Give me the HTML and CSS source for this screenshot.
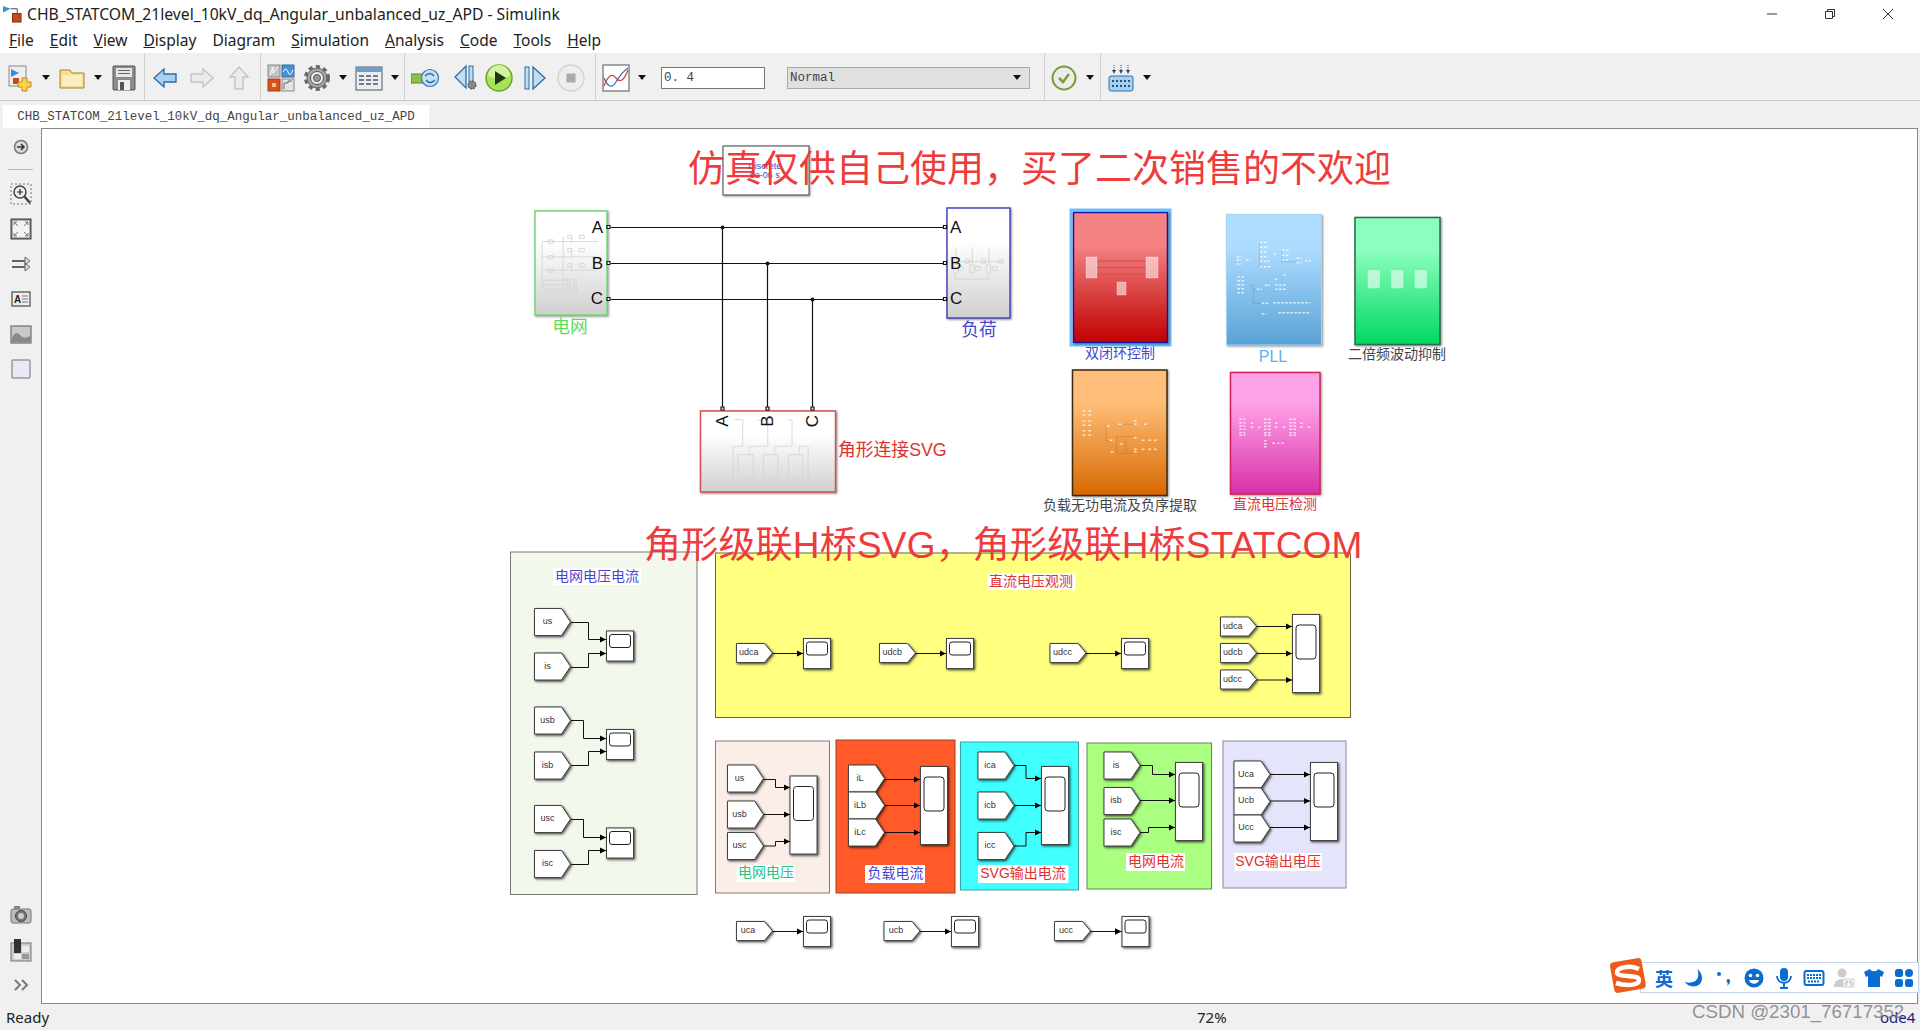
FILE: index.html
```html
<!DOCTYPE html>
<html>
  <head>
    <title>CHB_STATCOM_21level_10kV_dq_Angular_unbalanced_uz_APD - Simulink</title>
    <link rel="stylesheet" href="styles.css">
  </head>
  <body>
    <div class="titlebar">
      <svg class="app-icon" viewBox="0 0 20 20"><path d="M0 2l8 3-8 4z" fill="#3f8fd8"/><path d="M8 5h7v6" class="ico-line"/><rect x="10" y="10" width="9" height="9" fill="#c8481c" stroke="#803010"/></svg>
      <span class="title-text">CHB_STATCOM_21level_10kV_dq_Angular_unbalanced_uz_APD - Simulink</span>
      <div class="win-controls">
        <svg viewBox="0 0 12 12"><path d="M1 6h10" class="win-line"/></svg>
        <svg viewBox="0 0 12 12"><path d="M1.5 3.5h7v7h-7zM3.5 3.5v-2h7v7h-2" class="win-line"/></svg>
        <svg viewBox="0 0 12 12"><path d="M1 1l10 10M11 1L1 11" class="win-line"/></svg>
      </div>
    </div>

    <div class="menubar">
      <span><u>F</u>ile</span>
      <span><u>E</u>dit</span>
      <span><u>V</u>iew</span>
      <span><u>D</u>isplay</span>
      <span>Dia<u>g</u>ram</span>
      <span><u>S</u>imulation</span>
      <span><u>A</u>nalysis</span>
      <span><u>C</u>ode</span>
      <span><u>T</u>ools</span>
      <span><u>H</u>elp</span>
    </div>

    <div class="toolbar">
      <div class="tool-group group-file">
        <svg class="tool" viewBox="0 0 28 28"><rect x="3" y="2" width="17" height="20" fill="#eee" stroke="#888"/><path d="M5 5l8 4-8 4z" fill="#3a8ad4"/><rect x="7" y="14" width="6" height="6" fill="#c8481c"/><path d="M16 14h5v4h4v5h-4v4h-5v-4h-4v-5h4z" fill="#ffd24a" stroke="#b58a1c"/></svg>
        <i class="drop"></i>
        <svg class="tool" viewBox="0 0 28 28"><path d="M2 6h10l2 3h12v15H2z" fill="#f7dc93" stroke="#a8842c"/><path d="M4 11h20v11H4z" fill="#fbeec4"/></svg>
        <i class="drop"></i>
        <svg class="tool" viewBox="0 0 28 28"><rect x="3" y="2" width="22" height="24" rx="1" fill="#8c8c8c" stroke="#555"/><rect x="6" y="4" width="16" height="9" fill="#e6e6e6"/><path d="M8 6.500h12M8 9.500h12" class="ico-dark"/><rect x="8" y="16" width="12" height="10" fill="#eee"/><rect x="10" y="18" width="4" height="8" fill="#555"/></svg>
      </div>
      <div class="tool-group group-nav">
        <svg class="tool" viewBox="0 0 28 28"><path d="M3 14l10-9v5h12v8H13v5z" fill="#a9d0f0" stroke="#2d6ea8" stroke-width="1.4"/></svg>
        <svg class="tool" viewBox="0 0 28 28"><path d="M25 14l-10-9v5H3v8h12v5z" fill="#ececec" stroke="#c4c4c4" stroke-width="1.4"/></svg>
        <svg class="tool" viewBox="0 0 28 28"><path d="M14 3l-9 10h5v12h8V13h5z" fill="#ececec" stroke="#c4c4c4" stroke-width="1.4"/></svg>
      </div>
      <div class="tool-group group-lib">
        <svg class="tool" viewBox="0 0 28 28"><rect x="1" y="1" width="12" height="12" fill="#c4c4c4" stroke="#888"/><path d="M3 11l3-8v6l5-6" fill="none" stroke="#fff"/><rect x="15" y="1" width="12" height="12" fill="#4a90d0" stroke="#2d6ea8"/><path d="M16 8q3-6 5 0t5-2" fill="none" stroke="#fff"/><rect x="1" y="15" width="12" height="12" fill="#d8501c" stroke="#a03c10"/><rect x="5" y="19" width="4" height="4" fill="#f7c08a"/><rect x="15" y="15" width="12" height="12" fill="#e4e4e4" stroke="#888"/><path d="M17 25v-6h4v-2h4" fill="none" stroke="#666"/></svg>
        <svg class="tool" viewBox="0 0 28 28"><circle cx="14" cy="14" r="11" fill="none" stroke="#6a6a6a" stroke-width="4" stroke-dasharray="4 3.2"/><circle cx="14" cy="14" r="10" fill="#a4a4a4" stroke="#666"/><circle cx="14" cy="14" r="6.5" fill="#eee" stroke="#555"/><circle cx="14" cy="14" r="3.5" fill="#999" stroke="#555"/></svg>
        <i class="drop"></i>
        <svg class="tool" viewBox="0 0 28 28"><rect x="1" y="3" width="26" height="23" fill="#e8eef4" stroke="#556"/><rect x="1" y="3" width="26" height="5" fill="#6f9cc8"/><path d="M4 12h20M4 16h20M4 20h20" stroke="#778" stroke-width="2" stroke-dasharray="5 2"/></svg>
        <i class="drop"></i>
      </div>
      <div class="tool-group group-sim">
        <svg class="tool" viewBox="0 0 28 28"><rect x="0" y="10" width="13" height="9" fill="#8fc04a" stroke="#5f8a2a"/><circle cx="19" cy="14" r="8.500" fill="#c6e0f6" stroke="#3f78b0" stroke-width="1.2"/><path d="M14 12q5-5 9 0M24 16q-5 5-9 0" fill="none" stroke="#2d6ea8" stroke-width="1.600"/></svg>
        <svg class="tool tool-push" viewBox="0 0 28 28"><path d="M2 13L13 2v22z" fill="#c4dcf2" stroke="#2d6ea8" stroke-width="1.3"/><rect x="16" y="2" width="4" height="16" fill="#c4dcf2" stroke="#2d6ea8"/><circle cx="19" cy="21" r="4" fill="#888" stroke="#444" stroke-dasharray="2 1"/></svg>
        <svg class="tool tool-pull" viewBox="0 0 28 28"><circle cx="14" cy="14" r="13" fill="#a8e05a" stroke="#6aa82a" stroke-width="1.5"/><path d="M3 12a11 11 0 0 1 22 0q-11 5-22 0z" fill="#d2f2a0"/><path d="M10 7l11 7-11 7z" fill="#1c3a10"/></svg>
        <svg class="tool" viewBox="0 0 28 28"><rect x="4" y="3" width="4" height="22" fill="#c4dcf2" stroke="#2d6ea8"/><path d="M12 3l12 11-12 11z" fill="#c4dcf2" stroke="#2d6ea8" stroke-width="1.3"/></svg>
        <svg class="tool" viewBox="0 0 28 28"><circle cx="14" cy="14" r="13" fill="#eee" stroke="#d4d4d4" stroke-width="1.5"/><rect x="9.5" y="9.5" width="9" height="9" fill="#aaa"/></svg>
      </div>
      <div class="tool-group group-time">
        <svg class="tool" viewBox="0 0 28 28"><rect x="1" y="1" width="26" height="26" fill="#fff" stroke="#777" stroke-width="1.3"/><path d="M2 22q6-16 12-8t12-8" fill="none" stroke="#d84040" stroke-width="1.3"/><path d="M2 14q6 14 12 4t12-14" fill="none" stroke="#3a70c8" stroke-width="1.3"/></svg>
        <i class="drop"></i>
        <span class="stop-time">0. 4</span>
        <span class="sim-mode">Normal<i class="drop"></i></span>
      </div>
      <div class="tool-group group-check">
        <svg class="tool" viewBox="0 0 28 28"><circle cx="14" cy="14" r="11.5" fill="#ececec" stroke="#76a03c" stroke-width="2"/><path d="M9 14l4 4 6-8" fill="none" stroke="#76a03c" stroke-width="2.5"/></svg>
        <i class="drop"></i>
      </div>
      <div class="tool-group group-grid">
        <svg class="tool" viewBox="0 0 28 28"><rect x="2" y="12" width="24" height="15" rx="2" fill="#a6d0f0" stroke="#2f6ea8"/><path d="M5 17h18M5 22h18" stroke="#24507c" stroke-width="2" stroke-dasharray="2 2"/><path d="M7 1v5M14 1v5M21 1v5" stroke="#24507c" stroke-dasharray="1 1"/><path d="M5 6h4l-2 4zM12 6h4l-2 4zM19 6h4l-2 4z" fill="#24507c"/></svg>
        <i class="drop"></i>
      </div>
    </div>

    <div class="tabbar">
      <div class="tab">CHB_STATCOM_21level_10kV_dq_Angular_unbalanced_uz_APD</div>
    </div>

    <div class="workspace">
      <div class="palette">
        <svg class="pal-top" viewBox="0 0 20 20"><circle cx="10" cy="10" r="6.5" fill="#ddd" stroke="#777" stroke-width="1.5"/><path d="M6 10h7M10 7l3 3-3 3" fill="none" stroke="#333" stroke-width="1.5"/></svg>
        <div class="pal-rule"></div>
        <svg class="pal-icon" viewBox="0 0 24 24"><rect x="2" y="2" width="20" height="20" fill="none" stroke="#777" stroke-dasharray="2 2"/><circle cx="11" cy="10" r="6" fill="#eee" stroke="#444" stroke-width="1.5"/><path d="M8 10h6M11 7v6" stroke="#222" stroke-width="1.2"/><path d="M15 14l6 7" stroke="#444" stroke-width="2.5"/></svg>
        <svg class="pal-icon" viewBox="0 0 24 24"><rect x="2" y="2" width="20" height="20" fill="#777" stroke="#444"/><rect x="3.500" y="3.500" width="17" height="17" fill="#f2f2f2"/><path d="M5 5l4 4M5 5h3M5 5v3M19 5l-4 4M19 5h-3M19 5v3M5 19l4-4M5 19h3M5 19v-3M19 19l-4-4M19 19h-3M19 19v-3" fill="none" stroke="#777"/></svg>
        <svg class="pal-icon" viewBox="0 0 24 24"><path d="M3 9h17M3 15h17" stroke="#333" stroke-width="1.3"/><path d="M16 5l5 4-5 4zM16 11l5 4-5 4z" fill="#ddd" stroke="#666"/></svg>
        <svg class="pal-icon" viewBox="0 0 24 24"><rect x="3" y="5" width="18" height="14" fill="#eee" stroke="#555" stroke-width="1.3"/><text x="5" y="12" class="pal-letter">A</text><path d="M13 9h6M13 12h6M13 15h6" stroke="#777"/></svg>
        <svg class="pal-icon" viewBox="0 0 24 24"><rect x="2" y="4" width="20" height="17" fill="#c8c8c8" stroke="#777" stroke-width="1.3"/><path d="M3 16q4-8 8-3t10 1v6H3z" fill="#888"/></svg>
        <svg class="pal-icon" viewBox="0 0 24 24"><rect x="3" y="3" width="18" height="18" rx="1" fill="#e8e8f8" stroke="#999" stroke-width="1.5"/></svg>
        <div class="pal-bottom">
          <svg class="pal-icon" viewBox="0 0 24 24"><rect x="2" y="6" width="20" height="14" rx="2" fill="#bbb" stroke="#777"/><circle cx="12" cy="13" r="5.5" fill="#777" stroke="#444"/><circle cx="12" cy="13" r="3" fill="#ccc"/><rect x="5" y="3" width="6" height="3" fill="#888"/></svg>
          <svg class="pal-icon" viewBox="0 0 24 24"><rect x="2" y="5" width="20" height="18" fill="#ccc" stroke="#777"/><rect x="5" y="1" width="7" height="14" fill="#333"/><rect x="13" y="8" width="7" height="6" fill="#eee"/><rect x="5" y="16" width="7" height="5" fill="#eee"/><rect x="13" y="16" width="7" height="5" fill="#999"/></svg>
          <svg class="pal-icon" viewBox="0 0 24 24"><path d="M6 7l5 5-5 5M13 7l5 5-5 5" fill="none" stroke="#777" stroke-width="2"/></svg>
        </div>
      </div>

      <div class="canvas">
        <svg class="diagram" viewBox="42 129 1875 874">
          <defs>
            <marker id="arrow" viewBox="0 0 6 6" refX="6" refY="3" markerWidth="6.5" markerHeight="6.5" markerUnits="userSpaceOnUse" orient="auto"><path d="M0 0L6 3L0 6z"/></marker>
            <linearGradient id="g-white" x1="0" y1="0" x2="0" y2="1"><stop offset="0.3" stop-color="#fff"/><stop offset="1" stop-color="#cfcfcf"/></linearGradient>
            <linearGradient id="g-red" x1="0" y1="0" x2="0" y2="1"><stop offset="0.25" stop-color="#f48282"/><stop offset="1" stop-color="#c00000"/></linearGradient>
            <linearGradient id="g-blue" x1="0" y1="0" x2="0" y2="1"><stop offset="0.25" stop-color="#aedcff"/><stop offset="1" stop-color="#58a2d6"/></linearGradient>
            <linearGradient id="g-green" x1="0" y1="0" x2="0" y2="1"><stop offset="0.25" stop-color="#8cffc0"/><stop offset="1" stop-color="#00d860"/></linearGradient>
            <linearGradient id="g-orange" x1="0" y1="0" x2="0" y2="1"><stop offset="0.25" stop-color="#ffbf7a"/><stop offset="1" stop-color="#d86800"/></linearGradient>
            <linearGradient id="g-pink" x1="0" y1="0" x2="0" y2="1"><stop offset="0.25" stop-color="#ffa2e8"/><stop offset="1" stop-color="#d830a8"/></linearGradient>
            <g id="tag-lg"><path d="M0 0H27L36 13.5L27 27H0z" class="blk-white"/></g>
            <g id="tag-sm"><path d="M0 0H28L36 9.5L28 19H0z" class="blk-white"/></g>
            <g id="scope"><rect width="27" height="30" class="blk-white"/><rect x="3" y="3.5" width="21" height="13" rx="2.5" class="screen"/></g>
            <g id="scope-tall"><rect width="27" height="78" class="blk-white"/><rect x="3.5" y="10.5" width="20" height="34" rx="3" class="screen"/></g>
          </defs>

          <!-- power circuit -->
          <rect x="723" y="146" width="86" height="49" class="blk-white"/>
          <text x="766" y="166" class="pg-text">Discrete,</text>
          <text x="766" y="175" class="pg-text">5e-06 s.</text>

          <rect x="535" y="211" width="72" height="104" fill="url(#g-white)" class="blk line-green"/>
          <g transform="translate(500 130) scale(.357 .333)" class="sketch">
            <path d="M118 335V480M118 335H275M118 381H275M118 421H275M177 320V460M118 451H190M118 465H190M118 480H190M200 320V340M200 360V385M200 405V425"/>
            <path d="M135 330h14v10h-14zM135 377h14v10h-14zM135 417h14v10h-14zM190 316h12v10h-12zM222 316h14v10h-14zM190 356h12v10h-12zM222 356h14v10h-14zM190 401h12v10h-12zM222 401h14v10h-14zM188 447h10v8h-10zM205 447h10v8h-10zM188 461h10v8h-10zM205 461h10v8h-10zM188 475h10v8h-10zM205 475h10v8h-10z"/>
          </g>
          <text x="603" y="227" class="port end">A</text>
          <text x="603" y="263" class="port end">B</text>
          <text x="603" y="298" class="port end">C</text>
          <text x="570" y="327" class="cn17 col-green mid">电网</text>

          <rect x="947" y="208" width="63" height="110" fill="url(#g-white)" class="blk line-blue"/>
          <g transform="translate(500 130) scale(.357 .333)" class="sketch">
            <path d="M1277 352V405M1323 352V405M1370 352V405M1275 430V448H1368V430M1270 395H1410"/>
            <path d="M1303 388h12v12h-12zM1349 388h12v12h-12zM1397 388h12v12h-12zM1285 410h12v12h-12zM1332 410h12v12h-12zM1380 410h12v12h-12zM1270 405h12v24h-12zM1316 405h12v24h-12zM1362 405h12v24h-12z"/>
          </g>
          <text x="950" y="227" class="port">A</text>
          <text x="950" y="263" class="port">B</text>
          <text x="950" y="298" class="port">C</text>
          <text x="979" y="330" class="cn17 col-blue mid">负荷</text>

          <rect x="700.5" y="411" width="135" height="81" fill="url(#g-white)" class="blk line-red"/>
          <g transform="translate(500 130) scale(.357 .333)" class="sketch">
            <path d="M653 950V1060H863V950H838V975M653 950H680V870H655M698 975V950H750M750 870V950M770 975V950H818V870H805M720 872H750M698 1060V1042M768 1060V1042M838 1060V1042"/>
            <path d="M667 975h42v67h-42zM738 975h40v67h-40zM808 975h40v67h-40z"/>
          </g>
          <text transform="translate(722.5 421) rotate(-90)" class="port mid">A</text>
          <text transform="translate(767.5 421) rotate(-90)" class="port mid">B</text>
          <text transform="translate(812.5 421) rotate(-90)" class="port mid">C</text>
          <text x="838" y="450" class="cn17 col-red">角形连接SVG</text>

          <path d="M611 227.500H945M611 263.500H945M611 299.500H945M722.500 227.500V407M767.500 263.500V407M812.500 299.500V407" class="power"/>
          <circle cx="722.500" cy="227.500" r="2" class="dot"/>
          <circle cx="767.500" cy="263.500" r="2" class="dot"/>
          <circle cx="812.500" cy="299.500" r="2" class="dot"/>
          <path d="M607 225.500h3v3h-3zM607 261.500h3v3h-3zM607 297.500h3v3h-3zM943.500 225.500h3v3h-3zM943.500 261.500h3v3h-3zM943.500 297.500h3v3h-3zM721 407h3v3h-3zM766 407h3v3h-3zM811 407h3v3h-3z" class="port-mark"/>

          <!-- control subsystems -->
          <rect x="1071" y="210" width="99" height="135" class="selection"/>
          <rect x="1073.500" y="212.500" width="94" height="130" fill="url(#g-red)" class="blk line-navy"/>
          <path d="M1096 261H1146M1096 267.500H1146M1096 274H1146" class="red-lines"/>
          <path d="M1086 257h11v21h-11zM1146 257h12v21h-12zM1117 282h9v13h-9z" class="ghost"/>
          <text x="1120" y="353" class="cn14 col-blue mid">双闭环控制</text>

          <rect x="1226.500" y="214.500" width="95" height="130.500" fill="url(#g-blue)" class="blk line-sky"/>
          <g transform="translate(1040 190) scale(.3333)">
            <path d="M590 200H605M590 211H605M590 222H605M618 210H632M660 157H680M660 172H685M660 186H680M660 200H685M660 214H690M660 230H695M700 192H712M725 180H745M725 196H750M725 210H745M770 205H785M770 218H785M795 212H812M592 260H615M592 272H615M592 284H615M592 296H615M592 308H615M650 298H665M675 286H690M705 268H715M730 255H740M705 285H740M705 298H740M665 340H685M700 338H812M665 371H680M715 368H812" class="specks"/>
            <path d="M658 157V230M725 180V215M725 215H770M628 285H640V340H665M640 298H650" class="traces"/>
          </g>
          <text x="1273" y="356" class="lat16 col-sky mid">PLL</text>

          <rect x="1355" y="217.500" width="85" height="127" fill="url(#g-green)" class="blk line-dkgreen"/>
          <path d="M1368 270.500h11.500v17.500h-11.500zM1391.500 270.500h11.500v17.500h-11.500zM1415 270.500h11.500v17.500h-11.500z" class="ghost"/>
          <text x="1397" y="354" class="cn14 col-dark mid">二倍频波动抑制</text>

          <rect x="1072.500" y="370" width="94.500" height="125.500" fill="url(#g-orange)" class="blk line-brown"/>
          <g transform="translate(1040 190) scale(.3333)">
            <path d="M128 662H138M145 662H155M128 675H138M145 675H155M128 693H138M145 693H155M128 706H138M145 706H155M128 722H138M145 722H155M128 735H138M145 735H155M200 708H212M235 703H248M282 692H294M282 703H294M312 703H322M208 751H222M282 743H292M305 751H315M325 751H335M342 751H352M212 786H220M240 762H248M282 785H292M305 778H315M325 778H335M342 778H352M282 778H292" class="specks"/>
            <path d="M198 700V752M198 752H208M248 703H282M230 740V790H282M258 745V785M230 740H282" class="traces"/>
          </g>
          <text x="1120" y="505" class="cn14 col-dark mid">负载无功电流及负序提取</text>

          <rect x="1230.500" y="372.500" width="89.500" height="121.500" fill="url(#g-pink)" class="blk line-crimson"/>
          <g transform="translate(1040 190) scale(.3333)">
            <path d="M598 688H616M598 698H616M598 708H616M598 718H616M598 728H616M598 736H616M632 700H642M632 712H642M655 712H662M672 688H692M672 698H692M672 708H692M672 718H692M672 728H692M672 736H692M705 700H715M705 712H715M728 712H736M748 688H768M748 698H768M748 708H768M748 718H768M748 728H768M748 736H768M780 700H790M780 712H790M803 712H812M672 752H680M672 762H680M672 770H680M697 760H705M712 760H718M724 760H731" class="specks"/>
          </g>
          <text x="1275" y="504" class="cn14 col-red mid">直流电压检测</text>

          <!-- left panel -->
          <rect x="510.500" y="552" width="186.500" height="342.500" class="area area-mint"/>
          <rect x="553" y="568" width="88" height="17" class="label-bg"/>
          <text x="597" y="576" class="cn14 col-blue mid">电网电压电流</text>
          <use href="#tag-lg" x="534.500" y="608.500" class="blk"/>
          <use href="#tag-lg" x="534.500" y="653" class="blk"/>
          <use href="#tag-lg" x="534.500" y="707" class="blk"/>
          <use href="#tag-lg" x="534.500" y="752" class="blk"/>
          <use href="#tag-lg" x="534.500" y="805.500" class="blk"/>
          <use href="#tag-lg" x="534.500" y="850.500" class="blk"/>
          <use href="#scope" x="606.500" y="631" class="blk"/>
          <use href="#scope" x="606.500" y="729.500" class="blk"/>
          <use href="#scope" x="606.500" y="828" class="blk"/>
          <text x="547.500" y="621" class="tag mid">us</text>
          <text x="547.500" y="666" class="tag mid">is</text>
          <text x="547.500" y="720" class="tag mid">usb</text>
          <text x="547.500" y="765" class="tag mid">isb</text>
          <text x="547.500" y="818" class="tag mid">usc</text>
          <text x="547.500" y="863" class="tag mid">isc</text>
          <g class="wires" marker-end="url(#arrow)">
            <polyline points="571,622.500 588.500,622.500 588.500,639.500 606,639.500"/>
            <polyline points="571,667.500 588.500,667.500 588.500,653.500 606,653.500"/>
            <polyline points="571,720.500 583.500,720.500 583.500,738.500 606,738.500"/>
            <polyline points="571,765.500 588.500,765.500 588.500,751.500 606,751.500"/>
            <polyline points="571,819.500 583.500,819.500 583.500,837.500 606,837.500"/>
            <polyline points="571,864.500 588.500,864.500 588.500,850.500 606,850.500"/>
          </g>

          <!-- dc voltage -->
          <rect x="715.500" y="553" width="635" height="164.500" class="area area-yellow"/>
          <rect x="987.500" y="573" width="87.500" height="17" class="label-bg"/>
          <text x="1031" y="581" class="cn14 col-red mid">直流电压观测</text>
          <use href="#tag-sm" x="736.500" y="643.500" class="blk"/>
          <use href="#tag-sm" x="879.500" y="643.500" class="blk"/>
          <use href="#tag-sm" x="1050" y="643.500" class="blk"/>
          <use href="#scope" x="803.500" y="638.500" class="blk"/>
          <use href="#scope" x="946.500" y="638.500" class="blk"/>
          <use href="#scope" x="1121.500" y="638.500" class="blk"/>
          <use href="#tag-sm" x="1220.500" y="617" class="blk"/>
          <use href="#tag-sm" x="1220.500" y="643.500" class="blk"/>
          <use href="#tag-sm" x="1220.500" y="670" class="blk"/>
          <use href="#scope-tall" x="1292.500" y="614.500" class="blk"/>
          <text x="739" y="652" class="tag">udca</text>
          <text x="882.500" y="652" class="tag">udcb</text>
          <text x="1053" y="652" class="tag">udcc</text>
          <text x="1223" y="625.500" class="tag">udca</text>
          <text x="1223" y="652" class="tag">udcb</text>
          <text x="1223" y="678.500" class="tag">udcc</text>
          <g class="wires" marker-end="url(#arrow)">
            <polyline points="772.500,653.500 803,653.500"/>
            <polyline points="915.500,653.500 946,653.500"/>
            <polyline points="1086,653.500 1121,653.500"/>
            <polyline points="1256.500,626.500 1292,626.500"/>
            <polyline points="1256.500,653.500 1292,653.500"/>
            <polyline points="1256.500,680 1292,680"/>
          </g>

          <!-- grid voltage -->
          <rect x="715.500" y="741" width="114" height="152" class="area area-rose"/>
          <use href="#tag-lg" x="727.500" y="765" class="blk"/>
          <use href="#tag-lg" x="727.500" y="801" class="blk"/>
          <use href="#tag-lg" x="727.500" y="832.500" class="blk"/>
          <use href="#scope-tall" x="790" y="776" class="blk"/>
          <text x="739.500" y="778" class="tag mid">us</text>
          <text x="739.500" y="814" class="tag mid">usb</text>
          <text x="739.500" y="845" class="tag mid">usc</text>
          <g class="wires" marker-end="url(#arrow)">
            <polyline points="763.500,779.500 775.500,779.500 775.500,787.500 790,787.500"/>
            <polyline points="763.500,814.500 790,814.500"/>
            <polyline points="763.500,846 775.500,846 775.500,841.500 790,841.500"/>
          </g>
          <rect x="736.500" y="865" width="58.500" height="17" class="label-bg"/>
          <text x="766" y="872" class="cn14 col-mint mid">电网电压</text>

          <!-- load current -->
          <rect x="836" y="740" width="119" height="153" class="area area-orange"/>
          <use href="#tag-lg" x="848.500" y="765" class="blk"/>
          <use href="#tag-lg" x="848.500" y="792" class="blk"/>
          <use href="#tag-lg" x="848.500" y="819" class="blk"/>
          <use href="#scope-tall" x="920.500" y="766.500" class="blk"/>
          <text x="860" y="778" class="tag mid">iL</text>
          <text x="860" y="805" class="tag mid">iLb</text>
          <text x="860" y="832" class="tag mid">iLc</text>
          <g class="wires" marker-end="url(#arrow)">
            <polyline points="884.500,779.500 920,779.500"/>
            <polyline points="884.500,805.500 920,805.500"/>
            <polyline points="884.500,832.500 920,832.500"/>
          </g>
          <rect x="865" y="865" width="60" height="18" class="label-bg"/>
          <text x="895.500" y="873" class="cn14 col-blue mid">负载电流</text>

          <!-- svg output current -->
          <rect x="960.500" y="742" width="118" height="148" class="area area-cyan"/>
          <use href="#tag-lg" x="978" y="752" class="blk"/>
          <use href="#tag-lg" x="978" y="792" class="blk"/>
          <use href="#tag-lg" x="978" y="832.500" class="blk"/>
          <use href="#scope-tall" x="1041.500" y="766.500" class="blk"/>
          <text x="990" y="765" class="tag mid">ica</text>
          <text x="990" y="805" class="tag mid">icb</text>
          <text x="990" y="845" class="tag mid">icc</text>
          <g class="wires" marker-end="url(#arrow)">
            <polyline points="1014,765.500 1026,765.500 1026,778.500 1041,778.500"/>
            <polyline points="1014,805.500 1041,805.500"/>
            <polyline points="1014,846 1026,846 1026,832.500 1041,832.500"/>
          </g>
          <rect x="978" y="865" width="90.500" height="18" class="label-bg"/>
          <text x="1023" y="873" class="cn14 col-red mid">SVG输出电流</text>

          <!-- grid current -->
          <rect x="1087" y="743" width="124.500" height="146" class="area area-lime"/>
          <use href="#tag-lg" x="1104" y="752" class="blk"/>
          <use href="#tag-lg" x="1104" y="787.500" class="blk"/>
          <use href="#tag-lg" x="1104" y="819" class="blk"/>
          <use href="#scope-tall" x="1175.500" y="762.500" class="blk"/>
          <text x="1116" y="765" class="tag mid">is</text>
          <text x="1116" y="800" class="tag mid">isb</text>
          <text x="1116" y="832" class="tag mid">isc</text>
          <g class="wires" marker-end="url(#arrow)">
            <polyline points="1140,765.500 1152.500,765.500 1152.500,774.500 1175,774.500"/>
            <polyline points="1140,800.500 1175,800.500"/>
            <polyline points="1140,832.500 1148.500,832.500 1148.500,827.500 1175,827.500"/>
          </g>
          <rect x="1126" y="853" width="59" height="18" class="label-bg"/>
          <text x="1156" y="861" class="cn14 col-red mid">电网电流</text>

          <!-- svg output voltage -->
          <rect x="1223" y="741" width="123" height="147" class="area area-lilac"/>
          <use href="#tag-lg" x="1234" y="761" class="blk"/>
          <use href="#tag-lg" x="1234" y="788" class="blk"/>
          <use href="#tag-lg" x="1234" y="815" class="blk"/>
          <use href="#scope-tall" x="1310.500" y="762.500" class="blk"/>
          <text x="1246" y="774" class="tag mid">Uca</text>
          <text x="1246" y="800" class="tag mid">Ucb</text>
          <text x="1246" y="827" class="tag mid">Ucc</text>
          <g class="wires" marker-end="url(#arrow)">
            <polyline points="1270,774.500 1310,774.500"/>
            <polyline points="1270,801 1310,801"/>
            <polyline points="1270,827.500 1310,827.500"/>
          </g>
          <rect x="1234.500" y="853" width="87.500" height="18" class="label-bg"/>
          <text x="1278" y="861" class="cn14 col-red mid">SVG输出电压</text>

          <!-- bottom row -->
          <use href="#tag-sm" x="736.500" y="921.500" class="blk"/>
          <use href="#tag-sm" x="884" y="921.500" class="blk"/>
          <use href="#tag-sm" x="1054.500" y="921.500" class="blk"/>
          <use href="#scope" x="803.500" y="916.500" class="blk"/>
          <use href="#scope" x="951.500" y="916.500" class="blk"/>
          <use href="#scope" x="1122" y="916.500" class="blk"/>
          <text x="748" y="930" class="tag mid">uca</text>
          <text x="896" y="930" class="tag mid">ucb</text>
          <text x="1066" y="930" class="tag mid">ucc</text>
          <g class="wires" marker-end="url(#arrow)">
            <polyline points="772.500,931.500 803,931.500"/>
            <polyline points="920,931.500 951,931.500"/>
            <polyline points="1090.500,931.500 1121.500,931.500"/>
          </g>

          <!-- annotations -->
          <text x="688" y="169" class="banner">仿真仅供自己使用，买了二次销售的不欢迎</text>
          <text x="644" y="545" class="banner banner-wide">角形级联H桥SVG，角形级联H桥STATCOM</text>
        </svg>
      </div>
    </div>

    <div class="statusbar">
      <span class="status-ready">Ready</span>
      <span class="status-zoom">72%</span>
      <span class="status-solver">ode4</span>
    </div>

    <div class="watermark">CSDN @2301_76717352</div>

    <div class="ime">
      <svg class="ime-logo" viewBox="0 0 40 38"><rect x="4" y="3" width="32" height="31" rx="4" transform="rotate(-10 20 19)" fill="#ee5a1a"/><path d="M31 12C22 8 9 10 9 15.500C9 21 31 17 31 23C31 29 17 29 8 26" fill="none" stroke="#fff" stroke-width="4.500"/></svg>
      <div class="ime-bar">
        <span class="ime-item ime-lang">英</span>
        <svg class="ime-item" viewBox="0 0 22 22"><path d="M14 2C18 10 13 18 2 15C5 21 19 22 19 11C19 7 17 4 14 2z" class="ime-fill"/></svg>
        <svg class="ime-item" viewBox="0 0 22 22"><circle cx="6" cy="7" r="2" class="ime-fill"/><path d="M15 12c3 0 3 4-1 7 1-2 1-3 0-4-1-1 0-3 1-3z" class="ime-fill"/></svg>
        <svg class="ime-item" viewBox="0 0 22 22"><circle cx="11" cy="11" r="9.500" class="ime-fill"/><circle cx="7.500" cy="8.500" r="1.800" fill="#fff"/><circle cx="14.500" cy="8.500" r="1.800" fill="#fff"/><path d="M6 13h10c-1 5-9 5-10 0z" fill="#fff"/></svg>
        <svg class="ime-item" viewBox="0 0 22 22"><rect x="7" y="1" width="8" height="13" rx="4" class="ime-fill"/><path d="M4 9c0 9 14 9 14 0M11 16v5M7 21h8" fill="none" stroke="#0a6ccf" stroke-width="1.800"/></svg>
        <svg class="ime-item" viewBox="0 0 22 22"><rect x="1.500" y="4" width="19" height="14" rx="2" fill="none" stroke="#0a6ccf" stroke-width="2"/><path d="M4 8h14M4 11h14M5 14.500h12" stroke="#0a6ccf" stroke-width="2" stroke-dasharray="2 1"/></svg>
        <svg class="ime-item" viewBox="0 0 22 22"><circle cx="9" cy="6" r="4.500" fill="#ccc"/><path d="M1 20c0-6 4-8 8-8 2 0 3 .5 3 .5V20z" fill="#ccc"/><rect x="10" y="12" width="11" height="8" fill="#fff" stroke="#ccc"/><path d="M12 14h2.500v2h-2.500v2h2.500M16.500 14h3M16.500 14v2h3v2h-3" fill="none" stroke="#bbb"/></svg>
        <svg class="ime-item" viewBox="0 0 22 22"><path d="M7 2L1 5l2 5 2-1v11h12V9l2 1 2-5-6-3c-1 3-7 3-8 0z" class="ime-fill"/></svg>
        <svg class="ime-item" viewBox="0 0 22 22"><rect x="2" y="2" width="8" height="8" rx="2.500" class="ime-fill"/><rect x="12" y="2" width="8" height="8" rx="4" class="ime-fill"/><rect x="2" y="12" width="8" height="8" rx="2.500" class="ime-fill"/><rect x="12" y="12" width="8" height="8" rx="2.500" class="ime-fill"/></svg>
      </div>
    </div>
  </body>
</html>
```

FILE: styles.css
```css
html, body {
  margin: 0;
  height: 100%;
}

body {
  width: 1920px;
  height: 1030px;
  overflow: hidden;
  position: relative;
  display: flex;
  flex-direction: column;
  background: #f0f0f0;
  color: #222;
  font-family: "Noto Sans", "Noto Sans CJK SC", sans-serif;
}

/* window chrome */
.titlebar {
  height: 27px;
  display: flex;
  align-items: center;
  background: #fff;
  padding-left: 3px;
  font-size: 15.7px;
}

.app-icon {
  width: 19px;
  height: 19px;
  margin-right: 5px;
}

.ico-line {
  fill: none;
  stroke: #444;
}

.title-text {
  white-space: nowrap;
}

.win-controls {
  margin-left: auto;
  display: flex;
  gap: 46px;
  padding-right: 26px;
}

.win-controls svg {
  width: 12px;
  height: 12px;
}

.win-line {
  fill: none;
  stroke: #333;
  stroke-width: 1;
}

.menubar {
  height: 26px;
  display: flex;
  align-items: center;
  gap: 16px;
  padding-left: 9px;
  background: #fff;
  font-size: 15.5px;
}

.toolbar {
  height: 47px;
  display: flex;
  align-items: center;
  border-bottom: 1px solid #c8c8c8;
  background: #f0f0f0;
}

.tool-group {
  height: 100%;
  display: flex;
  align-items: center;
  gap: 8px;
  padding-top: 2px;
  padding-left: 6px;
  border-right: 1px solid #cfcfcf;
  box-sizing: border-box;
}

.group-file { width: 145px; }
.group-nav { width: 116px; gap: 9px; }
.group-lib { width: 144px; }
.group-sim { width: 191px; }
.group-time { width: 449px; }
.group-check { width: 56px; padding-left: 5px; }
.group-grid { border-right: none; padding-left: 6px; }

.tool {
  width: 28px;
  height: 28px;
  flex: none;
}

.tool-push { margin-left: 6px; }
.tool-pull { margin-left: -4px; }

.drop {
  width: 0;
  height: 0;
  flex: none;
  border-left: 4px solid transparent;
  border-right: 4px solid transparent;
  border-top: 5px solid #111;
}

.ico-dark {
  stroke: #666;
}

.stop-time,
.sim-mode {
  height: 22px;
  box-sizing: border-box;
  display: flex;
  align-items: center;
  font-family: "Liberation Mono", monospace;
  font-size: 12.5px;
  padding-left: 2px;
  color: #444;
}

.stop-time {
  width: 104px;
  margin-left: 7px;
  background: #fff;
  border: 1px solid #777;
}

.sim-mode {
  width: 243px;
  margin-left: 14px;
  justify-content: space-between;
  padding-right: 8px;
  background: #e0e0e0;
  border: 1px solid #aaa;
}

.tabbar {
  height: 27px;
  display: flex;
  align-items: flex-end;
  padding-left: 3px;
}

.tab {
  width: 426px;
  height: 23px;
  background: #fff;
  display: flex;
  align-items: center;
  justify-content: center;
  font-family: "Liberation Mono", monospace;
  font-size: 12.5px;
  color: #444;
}

.workspace {
  height: 876px;
  display: flex;
}

.palette {
  width: 41px;
  flex: none;
  display: flex;
  flex-direction: column;
  align-items: center;
  padding-top: 9px;
  gap: 11px;
  box-sizing: border-box;
}

.pal-top {
  width: 20px;
  height: 20px;
}

.pal-rule {
  width: 25px;
  height: 1px;
  background: #bbb;
  margin: 1px 0;
}

.pal-icon {
  width: 24px;
  height: 24px;
  flex: none;
}

.pal-letter {
  font: bold 10px "Liberation Sans", sans-serif;
  fill: #222;
}

.pal-bottom {
  margin-top: auto;
  padding-bottom: 7px;
  display: flex;
  flex-direction: column;
  gap: 11px;
}

.canvas {
  width: 1875px;
  height: 874px;
  flex: none;
  background: #fff;
  border: 1px solid #888;
}

.diagram {
  display: block;
  width: 1875px;
  height: 874px;
}

/* diagram blocks */
.blk {
  filter: drop-shadow(1px 1.5px 1px rgba(0, 0, 0, 0.45));
  stroke-width: 1;
}

.blk-white {
  fill: #fff;
  stroke: #444;
  stroke-width: 1;
  filter: drop-shadow(1px 1.5px 1px rgba(0, 0, 0, 0.4));
}

.screen {
  fill: #fff;
  stroke: #222;
  stroke-width: 1;
}

.line-green { stroke: #6fdc6f; stroke-width: 1.5; }
.line-blue { stroke: #4646c4; stroke-width: 1.5; }
.line-red { stroke: #d85050; stroke-width: 1.5; }
.line-navy { stroke: #1414a0; stroke-width: 1.5; }
.line-sky { stroke: #a8d4f4; }
.line-dkgreen { stroke: #2a6a4a; stroke-width: 1.5; }
.line-brown { stroke: #3a2a10; stroke-width: 1.5; }
.line-crimson { stroke: #d82050; stroke-width: 1.5; }

.selection {
  fill: none;
  stroke: #6dbfff;
  stroke-width: 3;
}

.sketch {
  fill: none;
  stroke: #d4d4d4;
  stroke-width: 2.5;
}

.ghost {
  fill: rgba(255, 255, 255, 0.55);
  stroke: rgba(255, 255, 255, 0.3);
}

.red-lines {
  fill: none;
  stroke: #d05050;
}

.specks {
  fill: none;
  stroke: rgba(255, 255, 255, 0.7);
  stroke-width: 4.5;
  stroke-dasharray: 8 4;
}

.traces {
  fill: none;
  stroke: rgba(70, 60, 40, 0.25);
  stroke-width: 2;
}

.power {
  fill: none;
  stroke: #111;
  stroke-width: 1.2;
}

.dot {
  fill: #111;
}

.port-mark {
  fill: #fff;
  stroke: #111;
  stroke-width: 1.2;
}

.wires polyline {
  fill: none;
  stroke: #111;
  stroke-width: 1;
}

.area {
  stroke-width: 1;
}

.area-mint { fill: #f3f8ec; stroke: #777; }
.area-yellow { fill: #ffff80; stroke: #666633; }
.area-rose { fill: #fbeee8; stroke: #8a7a70; }
.area-orange { fill: #ff5a28; stroke: #a04020; }
.area-cyan { fill: #40ffff; stroke: #40a0a0; }
.area-lime { fill: #aaff80; stroke: #5a8a50; }
.area-lilac { fill: #e4e4fa; stroke: #8888a0; }

.label-bg {
  fill: #fff;
}

/* diagram text */
text {
  dominant-baseline: central;
}

.mid { text-anchor: middle; }
.end { text-anchor: end; }

.port {
  font: 17px "Liberation Sans", sans-serif;
  fill: #111;
}

.tag {
  font: 9px "Liberation Sans", sans-serif;
  fill: #333;
}

.pg-text {
  font: 9px "Liberation Sans", sans-serif;
  fill: #4646d0;
  text-anchor: middle;
}

.cn17 {
  font: 17.8px "Liberation Sans", "Noto Sans CJK SC", sans-serif;
}

.cn14 {
  font: 14px "Liberation Sans", "Noto Sans CJK SC", sans-serif;
}

.lat16 {
  font: 16px "Liberation Sans", sans-serif;
}

.col-green { fill: #5cdc5c; }
.col-blue { fill: #4646d0; }
.col-red { fill: #e03030; }
.col-sky { fill: #60b0f0; }
.col-dark { fill: #444; }
.col-mint { fill: #30c080; }

.banner {
  font: 37px "Liberation Sans", "Noto Sans CJK SC", sans-serif;
  fill: #ee3b3b;
}

.banner-wide {
  letter-spacing: 0.2px;
}

/* status bar */
.statusbar {
  height: 26px;
  display: flex;
  align-items: center;
  padding-left: 6px;
  font-size: 15px;
}

.status-ready {
  width: 1191px;
}

.status-zoom {
  width: 683px;
}

.status-solver {
  color: #1a1a7a;
}

.watermark {
  position: absolute;
  left: 1692px;
  top: 1001px;
  font: 18.7px "Liberation Sans", sans-serif;
  color: rgba(120, 120, 120, 0.8);
  white-space: nowrap;
}

.ime {
  position: absolute;
  left: 1608px;
  top: 957px;
  width: 311px;
  height: 38px;
}

.ime-logo {
  position: absolute;
  left: 0;
  top: 0;
  width: 40px;
  height: 38px;
  z-index: 1;
}

.ime-bar {
  position: absolute;
  left: 32px;
  top: 5px;
  width: 279px;
  height: 31px;
  box-sizing: border-box;
  display: flex;
  align-items: center;
  gap: 8px;
  padding-left: 12px;
  background: #fff;
  border: 1px solid #c5d4e6;
}

.ime-item {
  width: 22px;
  height: 22px;
  flex: none;
}

.ime-lang {
  font: bold 18px "Noto Sans CJK SC", sans-serif;
  color: #0a6ccf;
  line-height: 22px;
  text-align: center;
}

.ime-fill {
  fill: #0a6ccf;
}
```
